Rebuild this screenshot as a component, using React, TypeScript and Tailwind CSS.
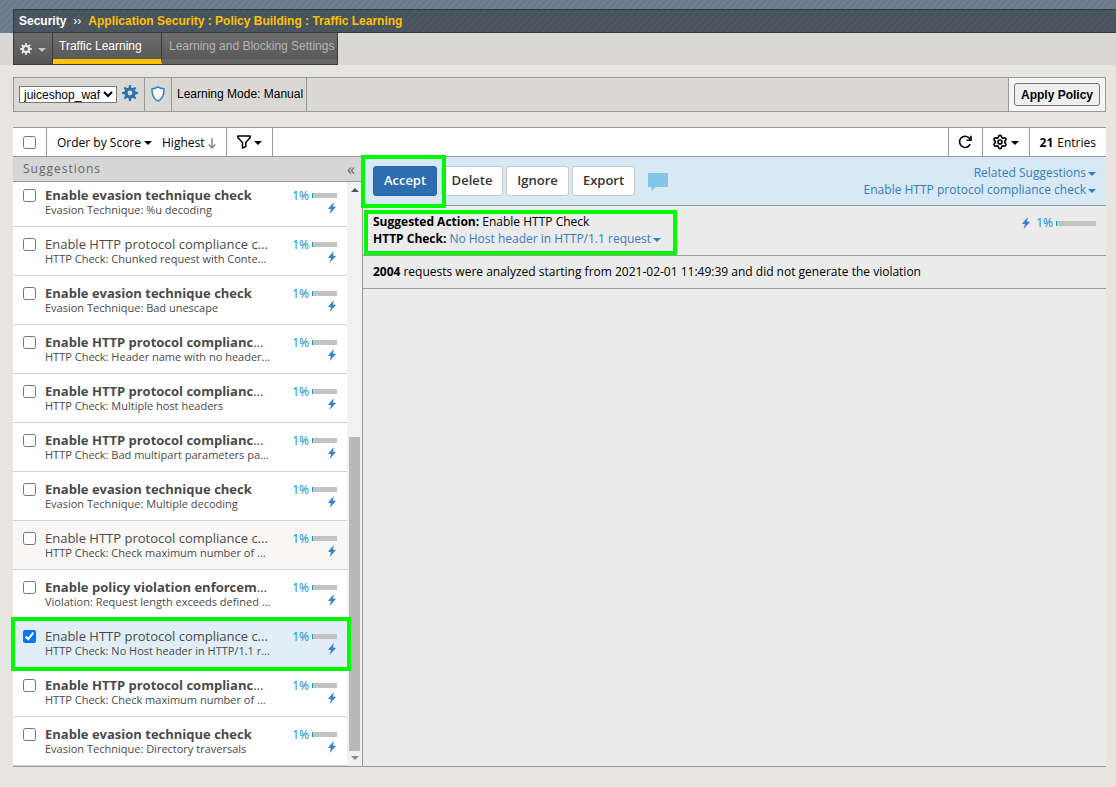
import React from "react";
import { Settings } from "lucide-react";

type Suggestion = { title: string; detail: string; bold: boolean; cut?: boolean; state?: "hover" | "selected" };

const suggestions: Suggestion[] = [
  { title: "Enable evasion technique check", detail: "Evasion Technique: %u decoding", bold: true },
  { title: "Enable HTTP protocol compliance c", cut: true, detail: "HTTP Check: Chunked request with Conte...", bold: false },
  { title: "Enable evasion technique check", detail: "Evasion Technique: Bad unescape", bold: true },
  { title: "Enable HTTP protocol complianc", cut: true, detail: "HTTP Check: Header name with no header...", bold: true },
  { title: "Enable HTTP protocol complianc", cut: true, detail: "HTTP Check: Multiple host headers", bold: true },
  { title: "Enable HTTP protocol complianc", cut: true, detail: "HTTP Check: Bad multipart parameters pa...", bold: true },
  { title: "Enable evasion technique check", detail: "Evasion Technique: Multiple decoding", bold: true },
  { title: "Enable HTTP protocol compliance c", cut: true, detail: "HTTP Check: Check maximum number of ...", bold: false, state: "hover" },
  { title: "Enable policy violation enforcem", cut: true, detail: "Violation: Request length exceeds defined ...", bold: true },
  { title: "Enable HTTP protocol compliance c", cut: true, detail: "HTTP Check: No Host header in HTTP/1.1 r...", bold: false, state: "selected" },
  { title: "Enable HTTP protocol complianc", cut: true, detail: "HTTP Check: Check maximum number of ...", bold: true },
  { title: "Enable evasion technique check", detail: "Evasion Technique: Directory traversals", bold: true },
];

const rowColors = { plain: "bg-white", hover: "bg-[#f8f7f5]", selected: "bg-[#e1eef7]" };

function gearPath(teeth: number, outer: number, inner: number, hole: number) {
  const step = (Math.PI * 2) / teeth;
  const pt = (r: number, a: number) => `${(12 + r * Math.cos(a)).toFixed(2)} ${(12 + r * Math.sin(a)).toFixed(2)}`;
  const points: string[] = [];
  for (let i = 0; i < teeth; i++) {
    const a = i * step - Math.PI / 2;
    points.push(pt(inner, a - step * 0.27), pt(outer, a - step * 0.17), pt(outer, a + step * 0.17), pt(inner, a + step * 0.27));
  }
  return `M${points.join("L")}ZM${12 + hole} 12a${hole} ${hole} 0 1 0 ${-2 * hole} 0a${hole} ${hole} 0 1 0 ${2 * hole} 0Z`;
}

function Gear({ className, hole }: { className: string; hole: number }) {
  return (
    <svg viewBox="0 0 24 24" className={className} fill="currentColor" fillRule="evenodd" aria-hidden="true">
      <path d={gearPath(8, 12, 8.6, hole)} />
    </svg>
  );
}

function Caret({ className = "" }: { className?: string }) {
  return (
    <svg viewBox="0 0 8 4" className={`h-1 w-2 shrink-0 ${className}`} fill="currentColor" aria-hidden="true">
      <path d="M0 0h8L4 4z" />
    </svg>
  );
}

function Bolt() {
  return (
    <svg viewBox="0 0 8 12" className="h-3 w-2 shrink-0 text-[#3c82c8]" fill="currentColor" aria-hidden="true">
      <path d="M5.8 0 0 6.700l3 .6L1.600 12 8 5.100 5 4.500z" />
    </svg>
  );
}

function ScoreBar({ className }: { className: string }) {
  return <span className={`h-[5px] border-l border-[#1b95cf] bg-[#c3c3c3] ${className}`} />;
}

function Percent() {
  return <span className="font-['Liberation_Sans_Narrow','Noto_Sans',sans-serif] text-xs">1%</span>;
}

function Highlight({ className }: { className: string }) {
  return <div className={`pointer-events-none absolute z-10 border-4 border-[#00fb00] ${className}`} />;
}

function Tick({ label, checked }: { label: string; checked?: boolean }) {
  return <input type="checkbox" aria-label={label} defaultChecked={checked} className="m-0 size-[13px] shrink-0" />;
}

function Row({ item, first }: { item: Suggestion; first: boolean }) {
  return (
    <li className={`relative flex items-start border-b border-[#d2d2d2] pr-2.5 pb-2 pl-2.5 ${first ? "pt-1" : "pt-2"} ${rowColors[item.state ?? "plain"]}`}>
      <div className="flex pt-[3px]">
        <Tick label={item.title} checked={item.state === "selected"} />
      </div>
      <div className="ml-[9px] h-8 whitespace-nowrap text-[#4a4a4a]">
        <div className="text-[13px] leading-[18px]">
          <span className={item.bold ? "font-bold" : ""}>{item.title}</span>
          {item.cut && <span>...</span>}
        </div>
        <div className="text-[11px] leading-3">{item.detail}</div>
      </div>
      <div className="ml-auto flex flex-col items-end">
        <div className="flex h-[18px] items-center gap-[3px] pt-px text-[#1b95cf]">
          <Percent />
          <ScoreBar className="w-[25px]" />
        </div>
        <div className="-mt-0.5 mr-px">
          <Bolt />
        </div>
      </div>
      {item.state === "selected" && <Highlight className="-top-0.5 -right-1 -bottom-1 -left-0.5" />}
    </li>
  );
}

const plainButton = "h-[30px] rounded-[3px] border border-[#c8c8c8] bg-white text-[13px] font-semibold text-[#333]";

export default function App() {
  return (
    <div className="min-h-screen bg-[#e6e5e0] pb-5 font-['Open_Sans','Noto_Sans',sans-serif] text-xs text-black">
      <header className="font-['Liberation_Sans',Arial,sans-serif]">
        <div className="bg-[#6a7a8b] bg-[repeating-linear-gradient(135deg,transparent_0_3px,#ffffff0d_3px_5px)] pt-[9px] pl-[13px]">
          <div className="flex h-6 items-center border-y border-l border-[#333a42] bg-[#48535d] bg-[repeating-linear-gradient(135deg,transparent_0_3px,#ffffff08_3px_5px)] pl-[5px] font-bold">
            <span className="text-white">Security</span>
            <span className="mx-[7px] font-normal text-white">››</span>
            <h1 className="text-[#fdc300]">Application Security : Policy Building : Traffic Learning</h1>
          </div>
        </div>
        <div className="flex h-8 bg-[#d9d8d4] pl-[13px]">
          <nav className="flex border-x border-b border-[#3a3a3a] bg-linear-to-b from-[#6e6e6e] to-[#555]">
            <button aria-label="Options" className="flex w-[39px] items-center justify-center gap-1.5 border-r border-[#3a3a3a] text-[#e8e8e8]">
              <Gear className="size-3" hole={4} />
              <Caret className="mt-0.5 text-[#c4c4c4]" />
            </button>
            <a href="#learning" className="w-[109px] border-r border-b-[5px] border-r-[#3a3a3a] border-b-[#fdc300] pt-1 pl-1.5 leading-[18px] text-white">
              Traffic Learning
            </a>
            <a href="#settings" className="border-b-[5px] border-[#666] pt-1 pr-[3px] pl-[7px] leading-[18px] text-[#b4b4b4]">
              Learning and Blocking Settings
            </a>
          </nav>
        </div>
      </header>

      <section className="mt-3 mr-2.5 ml-[13px] flex h-[35px] border border-[#999] bg-[#d9d8d4] font-['Liberation_Sans',Arial,sans-serif]">
        <div className="flex items-center gap-[5px] border-r border-[#999] pr-1.5 pl-[5px]">
          <select aria-label="Policy" className="h-[17px] w-[98px] border border-[#767676] bg-white text-xs leading-[15px]">
            <option>juiceshop_waf</option>
          </select>
          <button aria-label="Policy settings" className="pb-1 text-[#2b6fb5]">
            <Gear className="size-4" hole={3.6} />
          </button>
        </div>
        <div className="flex w-[27px] items-center justify-center border-r border-[#999] pb-0.5">
          <svg viewBox="0 0 14 16" className="h-4 w-3.5" fill="#fff" stroke="#2a7fc4" strokeWidth="1.4" aria-hidden="true">
            <path d="M7 .9c1.6 1.3 3.6 1.9 6 1.9.3 5.600-.9 9.500-6 12.300C1.900 12.300.7 8.400 1 2.800c2.400 0 4.400-.6 6-1.900z" />
          </svg>
        </div>
        <div className="flex items-center border-r border-[#999] pr-[3px] pb-0.5 pl-[5px]">Learning Mode: Manual</div>
        <div className="ml-auto flex items-center border-l border-[#999] bg-[#f5f5f3] px-[5px]">
          <button className="h-[23px] rounded-[3px] border border-[#767676] bg-[#efefef] px-1.5 font-bold">Apply Policy</button>
        </div>
      </section>

      <main className="mt-[15px] mr-2.5 ml-[13px] border-y border-[#999]">
        <div className="flex h-7 items-stretch bg-white">
          <div className="flex w-[34px] items-center border-r border-[#999] pl-2.5">
            <Tick label="Select all" />
          </div>
          <div className="flex w-[180px] items-center border-r border-[#999] pt-0.5 pl-2.5">
            <button className="flex items-center gap-[3px]">
              Order by Score <Caret />
            </button>
            <button className="ml-2.5 flex items-center gap-[3px]">
              Highest
              <svg viewBox="0 0 8 11" className="h-[11px] w-2" fill="none" stroke="#888" strokeWidth="1.5" aria-hidden="true">
                <path d="M4 0v10M.8 6.500 4 9.800l3.200-3.300" />
              </svg>
            </button>
          </div>
          <button aria-label="Filter" className="flex w-[46px] items-center justify-center gap-[3px] border-r border-[#999]">
            <svg viewBox="0 0 14 14" className="size-3.5" fill="none" stroke="currentColor" strokeWidth="1.500" strokeLinejoin="round" aria-hidden="true">
              <path d="M.8 1h12.400v1.500L8.800 7.500v4L5.500 13.200V7.500L.8 2.500z" />
            </svg>
            <Caret className="mt-0.5" />
          </button>
          <button aria-label="Refresh" className="ml-auto flex w-[35px] items-center justify-center border-x border-[#999]">
            <svg viewBox="0 0 14 14" className="size-3.5" fill="none" stroke="currentColor" strokeWidth="1.600" aria-hidden="true">
              <path d="M12.200 9.200A5.600 5.600 0 1 1 11.500 3.300L13 5M13 .8V5.200H8.600" />
            </svg>
          </button>
          <button aria-label="Settings" className="flex w-[47px] items-center justify-center gap-[3px] border-r border-[#999]">
            <Settings className="size-4" strokeWidth={2.5} />
            <Caret className="mt-0.5" />
          </button>
          <div className="flex items-center gap-1 px-2.5 pt-0.5">
            <b>21</b> Entries
          </div>
        </div>

        <div className="flex items-stretch">
          <section className="w-[349px] shrink-0">
            <div className="flex h-[26px] items-center border-y border-[#999] bg-[#d6d6d6] pr-[7px] pl-2.5 text-[#666]">
              <h2 className="tracking-[1px]">Suggestions</h2>
              <button aria-label="Collapse" className="ml-auto text-base leading-4">«</button>
            </div>
            <div className="flex">
              <ul className="min-w-0 flex-1">
                {suggestions.map((item, i) => (
                  <Row key={i} item={item} first={i === 0} />
                ))}
              </ul>
              <div className="flex w-[15px] flex-col items-center bg-[#f1f1f1] py-1.5">
                <Caret className="rotate-180 text-[#505050]" />
                <div className="mt-auto mb-[5px] h-[314px] w-[11px] bg-[#b8b8b8]" />
                <Caret className="text-[#8a8a8a]" />
              </div>
            </div>
          </section>

          <section className="min-w-0 flex-1 border-t border-l border-[#999] bg-[#ebebeb]">
            <div className="flex h-[49px] items-center border-b border-[#999] bg-[#d6e9f5] pr-2.5 pl-2.5">
              <div className="relative">
                <button className="h-[30px] w-16 rounded-[3px] border border-[#2a68a5] bg-[#2c6eb0] text-[13px] font-semibold text-white">Accept</button>
                <Highlight className="-top-[11px] -right-[9px] -bottom-3 -left-3" />
              </div>
              <div className="ml-1 flex gap-[3px]">
                <button className={`${plainButton} w-[62px]`}>Delete</button>
                <button className={`${plainButton} w-[63px]`}>Ignore</button>
                <button className={`${plainButton} w-[63px]`}>Export</button>
              </div>
              <button aria-label="Comment" className="ml-[13px] pt-0.5 text-[#84c5e9]">
                <svg viewBox="0 0 20 18" className="h-[18px] w-5" fill="currentColor" aria-hidden="true">
                  <path d="M1 0h18a1 1 0 0 1 1 1v12a1 1 0 0 1-1 1H8l-4.500 4V14H1a1 1 0 0 1-1-1V1a1 1 0 0 1 1-1z" />
                </svg>
              </button>
              <div className="ml-auto flex flex-col items-end leading-[17px] text-[#377bbd]">
                <button className="flex items-center gap-0.5">
                  Related Suggestions <Caret className="mt-0.5" />
                </button>
                <button className="flex items-center gap-0.5">
                  Enable HTTP protocol compliance check <Caret className="mt-0.5" />
                </button>
              </div>
            </div>
            <div className="flex h-[50px] items-start justify-between border-b border-[#999] pt-[7px] pr-2.5 pl-2.5">
              <div className="relative leading-[17px]">
                <p>
                  <b>Suggested Action:</b> Enable HTTP Check
                </p>
                <div className="flex items-center gap-[3px]">
                  <b>HTTP Check:</b>
                  <button className="flex items-center gap-0.5 text-[#377bbd]">
                    No Host header in HTTP/1.1 request <Caret className="mt-0.5" />
                  </button>
                </div>
                <Highlight className="-top-[3px] -right-4 -bottom-2 -left-[9px]" />
              </div>
              <div className="flex h-5 items-center gap-[3px] text-[#1b95cf]">
                <Bolt />
                <span className="ml-[3px] flex"><Percent /></span>
                <ScoreBar className="w-10" />
              </div>
            </div>
            <p className="flex h-[33px] items-center gap-[3px] border-b border-[#999] px-2.5">
              <b>2004</b> requests were analyzed starting from 2021-02-01 11:49:39 and did not generate the violation
            </p>
          </section>
        </div>
      </main>
    </div>
  );
}
